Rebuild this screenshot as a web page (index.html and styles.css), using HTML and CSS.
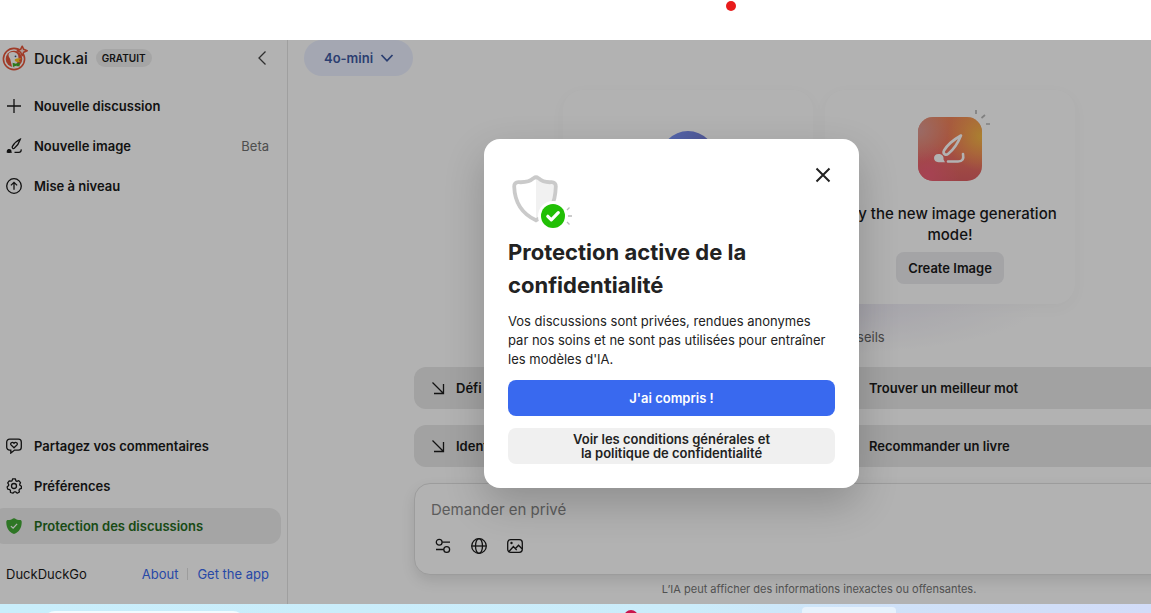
FILE: index.html
```html
<!DOCTYPE html>
<html lang="fr">
<head>
<meta charset="utf-8">
<meta name="viewport" content="width=device-width, initial-scale=1">
<title>Duck.ai</title>
<link rel="stylesheet" href="styles.css">
</head>
<body>
<header class="topstrip"><span class="rec-dot"></span></header>
<div class="app">
  <aside class="sidebar">
    <div class="brand">
      <svg class="logo" viewBox="0 0 26 26" width="26" height="26">
        <circle cx="12" cy="14" r="10.6" fill="none" stroke="#e5553a" stroke-width="1.600"/>
        <circle cx="12" cy="14" r="8.3" fill="#e5553a"/>
        <path d="M7 8.200c3-2.300 8.200-1.500 9.200 2.300l.6 5.300-2.300 2.500.8 3.200a8.300 8.300 0 0 1-5.300.3L8.200 14C6.500 11.500 6.200 10 7 8.200z" fill="#fff"/>
        <circle cx="13.500" cy="11.300" r=".9" fill="#31507a"/>
        <path d="M12.800 14.300c2-1 4.400-1.300 6.400-.8-.5 1-2.500 1.300-2.500 2s2 .4 1.800 1.100c-1.700.9-4.900.4-5.700-.8z" fill="#ffc21a"/>
        <path d="M10.600 17.800l3.400 1 3.600-1.600v4.400l-3.400-.8-3.200 1.200z" fill="#3fae2a"/>
        <path d="M20.200 1.200l1.500 3.100 3.500 1.400-3.500 1.500-1.500 3.400-1.600-3.400-3.300-1.500 3.300-1.400z" fill="#fbe0da" stroke="#e5553a" stroke-width="1.500" stroke-linejoin="round"/>
      </svg>
      <span class="brand-name">Duck.ai</span>
      <span class="badge">GRATUIT</span>
      <button class="collapse" aria-label="Réduire"><svg viewBox="0 0 10 16" width="10" height="16"><path d="M8.500 1.500L2 8l6.500 6.500"/></svg></button>
    </div>
    <nav class="menu">
      <button class="item"><svg viewBox="0 0 16 16" width="16" height="16"><path d="M8 1v14M1 8h14"/></svg><span>Nouvelle discussion</span></button>
      <button class="item"><svg viewBox="0 0 16 16" width="16" height="16"><path d="M14.300 1.200C11 2.700 8 5.600 6.300 8.600c-.5 1.200.9 2.500 2 1.700C11 8 13.200 4.800 14.300 1.200z"/><path d="M8.500 14.300h4.300c1.800 0 2.600-1.100 2.300-3"/><path class="solid" d="M.6 14.400c.4-.5-.1-1.200.4-2.200.9-1.700 3.300-1.600 4.200-.1.500 1-.1 2 1 2.500-1 .5-4.200.6-5.600-.2z"/></svg><span>Nouvelle image</span><small class="tag">Beta</small></button>
      <button class="item"><svg viewBox="0 0 16 16" width="16" height="16"><circle cx="8" cy="8" r="7.300"/><path d="M8 11.800V4.500M4.900 7.400L8 4.300l3.100 3.100"/></svg><span>Mise à niveau</span></button>
    </nav>
    <nav class="menu menu-bottom">
      <button class="item"><svg viewBox="0 0 16 16" width="16" height="16"><path d="M3.600 1.100h8.800a2.900 2.900 0 0 1 2.900 2.900v5.200a2.900 2.900 0 0 1-2.900 2.900H8.600l-3.800 3v-3H3.600A2.900 2.900 0 0 1 .7 9.200V4a2.900 2.900 0 0 1 2.900-2.900z"/><path d="M8 9.800L5 6.900C3.800 5.400 6.200 3.300 8 5.200c1.800-1.900 4.200.2 3 1.700z"/></svg><span>Partagez vos commentaires</span></button>
      <button class="item"><svg viewBox="0 0 16 16" width="16" height="16"><path d="M6.700.8h2.600l.6 2 1 .5 1.900-.7 1.700 2-.8 1.700.2 1 1.500 1v2l-1.900.9-.5.900.4 1.900-2.100 1.200-1.500-1.300H8.200l-1.300 1.300-2.400-.7-.1-2-.7-.9-2-.4-.6-2.300 1.500-1.300.1-1.100-1-1.700 1.500-2 2 .4.9-.6z" stroke-linejoin="round"/><circle cx="8" cy="8" r="2.500"/></svg><span>Préférences</span></button>
      <button class="item active"><svg viewBox="0 0 16 16" width="16" height="16"><path class="shield" d="M7 .5a1.800 1.800 0 0 1 2 0c1.400 1 3 1.500 5 1.500.9 0 1.700.7 1.700 1.700C15.900 9.800 13 14 8.700 15.800c-.5.200-.9.200-1.400 0C3 14 .1 9.800.3 3.700.3 2.700 1.100 2 2 2c2 0 3.600-.5 5-1.500z"/><path class="tick" d="M4.900 8.100l2.200 2.100 4-4.300"/></svg><span>Protection des discussions</span></button>
    </nav>
    <footer class="side-foot"><span>DuckDuckGo</span><span class="links"><a href="#about">About</a><i class="sep"></i><a href="#app">Get the app</a></span></footer>
  </aside>
  <main class="main">
    <button class="model">4o-mini <svg viewBox="0 0 14 10" width="14" height="10"><path d="M1.500 2L7 7.800 12.500 2"/></svg></button>
    <div class="column">
      <section class="cards">
        <article class="card"><span class="orb"></span></article>
        <article class="card">
          <svg class="tile" viewBox="0 0 72 72" width="72" height="72">
            <defs>
              <linearGradient id="g1" x1="0" y1="0" x2="0" y2="1"><stop offset="0" stop-color="#f0855a"/><stop offset=".55" stop-color="#ec735f"/><stop offset="1" stop-color="#dd6064"/></linearGradient>
              <radialGradient id="g2" cx="1" cy=".3" r=".55"><stop offset="0" stop-color="#f4b945"/><stop offset="1" stop-color="#ffb347" stop-opacity="0"/></radialGradient>
              <radialGradient id="g3" cx=".15" cy=".9" r=".5"><stop offset="0" stop-color="#ee6078"/><stop offset="1" stop-color="#ee6078" stop-opacity="0"/></radialGradient>
              <radialGradient id="g4" cx="0" cy=".2" r=".5"><stop offset="0" stop-color="#dd9a94"/><stop offset="1" stop-color="#dd9a94" stop-opacity="0"/></radialGradient>
            </defs>
            <rect y="8" width="64" height="64" rx="15" fill="url(#g1)"/><rect y="8" width="64" height="64" rx="15" fill="url(#g2)"/><rect y="8" width="64" height="64" rx="15" fill="url(#g3)"/><rect y="8" width="64" height="64" rx="15" fill="url(#g4)"/>
            <path d="M43 26.500C36 30.500 29 36.500 26 41.500c-1.500 3 1.700 5.500 4.300 3.300C35.500 40.500 40 34 43 26.500z" fill="none" stroke="#fff" stroke-width="2.600" stroke-linejoin="round"/>
            <path d="M30 52.500h10c4.500 0 6-2.500 5-7.500" fill="none" stroke="#fff" stroke-width="2.600" stroke-linecap="round"/>
            <path d="M20.500 45c4 0 5.500 2.500 5 5.500l1.500 2.700h-6.500c-6 0-6-8.200 0-8.200z" fill="#fff"/>
            <path d="M58 1v4M63.500 9l3.500-3M68 15h4" stroke="#b8b8b8" stroke-width="1.700"/>
          </svg>
          <h2>Try the new image generation mode!</h2>
          <button class="create">Create Image</button>
        </article>
      </section>
      <p class="hint">Questions et conseils</p>
      <section class="prompts">
        <button class="prompt"><svg viewBox="0 0 16 16" width="16" height="16"><path d="M2.500 2.500l11 11M13.500 4v9.500H4"/></svg>Défi du jour</button>
        <button class="prompt"><svg viewBox="0 0 16 16" width="16" height="16"><path d="M2.500 2.500l11 11M13.500 4v9.500H4"/></svg>Trouver un meilleur mot</button>
        <button class="prompt"><svg viewBox="0 0 16 16" width="16" height="16"><path d="M2.500 2.500l11 11M13.500 4v9.500H4"/></svg>Identifier un film</button>
        <button class="prompt"><svg viewBox="0 0 16 16" width="16" height="16"><path d="M2.500 2.500l11 11M13.500 4v9.500H4"/></svg>Recommander un livre</button>
      </section>
      <form class="composer">
        <textarea rows="1" aria-label="Demander en privé" placeholder="Demander en privé"></textarea>
        <div class="tools">
          <button type="button" aria-label="Réglages"><svg viewBox="0 0 16 16" width="16" height="16"><circle cx="4.200" cy="4.200" r="2.900"/><path d="M7.200 4.200H15M1 11.500h7.800"/><circle cx="11.700" cy="11.500" r="2.900"/></svg></button>
          <button type="button" aria-label="Recherche web"><svg viewBox="0 0 16 16" width="16" height="16"><circle cx="8" cy="8" r="7.300"/><ellipse cx="8" cy="8" rx="3.500" ry="7.300"/><path d="M.7 8h14.600"/></svg></button>
          <button type="button" aria-label="Ajouter une image"><svg viewBox="0 0 16 16" width="16" height="16"><rect x=".7" y="1.700" width="14.600" height="12.600" rx="3"/><path d="M2 13.500l4.400-5 3.300 3.600M8.500 10.500l3-3.200 3.500 3.500"/><circle class="solid" cx="4.500" cy="5" r="1.200"/></svg></button>
        </div>
      </form>
      <p class="disclaimer">L’IA peut afficher des informations inexactes ou offensantes.</p>
    </div>
  </main>
  <div class="overlay">
    <section class="modal" role="dialog" aria-labelledby="modal-title">
      <div class="modal-top">
        <svg class="guard" viewBox="0 0 64 56" width="64" height="56">
          <path d="M28 4c4 3.500 9 4.700 15.500 4.700 3 0 4.200 1.500 4.200 4C47.700 28 42 40 28 46z" fill="#f1f1f1"/>
          <path d="M25.600 4.200c1.600-1.200 3.200-1.200 4.800 0 3.400 3.200 7.500 4.300 13 4 3-.1 4.500 1.600 4.400 4.300C47.300 29 42.500 39.500 28 46.300 13.500 39.500 6.700 29 6.200 12.500 6.100 9.800 7.600 8.100 10.600 8.200c5.500.3 11.600-.8 15-4z" fill="none" stroke="#cacaca" stroke-width="3.800"/>
          <circle cx="45" cy="42" r="15" fill="#fff"/><circle cx="45" cy="42" r="12" fill="#21bf05"/>
          <path d="M39.800 42.300l3.500 3.500 7-7.200" fill="none" stroke="#fff" stroke-width="3.200" stroke-linecap="round" stroke-linejoin="round"/>
          <path d="M59 36l2.500-2.500M60 42h4M59 48l2.500 2.500" stroke="#bbb" stroke-width="1.300"/>
        </svg>
        <button class="close" aria-label="Fermer"><svg viewBox="0 0 16 16" width="16" height="16"><path d="M1.500 1.500l13 13M14.500 1.500l-13 13"/></svg></button>
      </div>
      <h1 id="modal-title">Protection active de la confidentialité</h1>
      <p class="modal-text">Vos discussions sont privées, rendues anonymes<br>par nos soins et ne sont pas utilisées pour entraîner<br>les modèles d'IA.</p>
      <button class="primary">J'ai compris !</button>
      <button class="secondary">Voir les conditions générales et<br>la politique de confidentialité</button>
    </section>
  </div>
</div>
<footer class="taskbar"><span class="search"></span><span class="alert"></span><span class="tab"></span></footer>
</body>
</html>
```

FILE: styles.css
```css
* { box-sizing: border-box; }
body { margin: 0; height: 100vh; display: flex; flex-direction: column; overflow: hidden; background: #fff; color: #1a1a1a; font-family: Inter, "Liberation Sans", sans-serif; font-size: 13px; }
button { font: inherit; color: inherit; border: 0; background: none; padding: 0; }
svg { flex: none; fill: none; stroke: currentColor; stroke-width: 1.3px; }
.logo, .tile, .guard { stroke: none; stroke-width: initial; }
.solid { fill: currentColor; stroke: none; }
h1, h2, p { margin: 0; }

.topstrip { flex: none; height: 40px; position: relative; }
.rec-dot { position: absolute; left: 726px; top: 1px; width: 10px; height: 10px; border-radius: 50%; background: #e81c1c; }

.app { flex: 1; min-height: 0; display: flex; position: relative; align-self: flex-start; }
.sidebar { width: 288px; border-right: 1px solid #e4e4e4; padding: 0 6px 0 0; display: flex; flex-direction: column; }
.brand { display: flex; align-items: center; height: 36px; padding: 0 14px 0 2px; }
.logo { margin-right: 6px; }
.brand-name { font-size: 15px; font-weight: 500; margin-right: 8px; }
.badge { background: #ededed; border-radius: 9px; padding: 0 6px; line-height: 18px; font-size: 10px; font-weight: 600; }
.collapse { margin-left: auto; height: 16px; color: #444; }
.menu { display: flex; flex-direction: column; gap: 4px; margin: 12px 0 0 -8px; }
.menu-bottom { margin-top: auto; }
.item { display: flex; align-items: center; gap: 12px; height: 36px; padding: 0 12px 0 14px; border-radius: 12px; font-weight: 600; text-align: left; }
.tag { margin-left: auto; font-size: 13px; font-weight: 400; color: #707070; }
.active { background: #ececec; color: #256b1d; }
.shield { fill: #43a935; stroke: none; }
.tick { stroke: #fff; }
.side-foot { display: flex; justify-content: space-between; align-items: center; height: 60px; padding: 0 12px 0 6px; }
.links { display: flex; align-items: center; gap: 9px; }
.links a { color: #3969ef; text-decoration: none; }
.sep { width: 1px; height: 12px; background: #e0e0e0; }

.main { min-width: 1062px; display: flex; flex-direction: column; }
.model { align-self: flex-start; flex: none; display: flex; align-items: center; gap: 7px; height: 36px; margin-left: 16px; padding: 0 19px 0 20px; border-radius: 18px; background: #ebf0ff; color: #3e5aa2; font-weight: 600; }
.model svg { stroke-width: 1.8px; }
.column { flex: 1; width: 810px; margin: 14px auto 0; display: flex; flex-direction: column; }
.cards { display: flex; justify-content: center; gap: 12px; }
.card { width: 250px; height: 214px; border-radius: 20px; background: #fff; box-shadow: 0 4px 16px #00000008; display: flex; flex-direction: column; align-items: center; padding: 19px 16px 20px; }
.orb { width: 56px; height: 56px; margin-top: 22px; border-radius: 50%; background: linear-gradient(90deg, #7b98ff, #7179cf); }
.tile { margin-left: 8px; }
.card h2 { margin: 22px 0 7px; font-size: 15px; line-height: 21px; font-weight: 500; text-align: center; }
.create { flex: none; height: 32px; padding: 0 12px; border-radius: 8px; background: #ebebee; font-weight: 600; }
.hint { text-align: center; color: #666; line-height: 18px; padding: 24px 0 21px; background: radial-gradient(ellipse 220px 50px at 50% 0, #eae7f3, #fff0); }
.prompts { display: grid; grid-template-columns: 1fr 1fr; gap: 16px; margin-bottom: 16px; }
.prompt { display: flex; align-items: center; gap: 10px; height: 42px; padding: 0 16px; border-radius: 12px; background: #e8e8e8; font-weight: 600; }
.composer { border: 1px solid #e0e0e0; border-radius: 16px; background: #fff; box-shadow: 0 6px 14px #0000001c; padding: 14px 16px 20px; }
.composer textarea { display: block; width: 100%; border: 0; padding: 0; resize: none; background: none; font: 15px/24px Inter, "Liberation Sans", sans-serif; color: inherit; outline: 0; overflow: hidden; }
.composer textarea::placeholder { color: #858585; }
.tools { display: flex; gap: 20px; margin-top: 16px; padding-left: 4px; }
.tools button { height: 16px; }
.disclaimer { margin-top: 5px; text-align: center; font-size: 11px; line-height: 18px; color: #747474; }

.overlay { position: absolute; inset: 0; display: grid; place-items: center; padding: 0 7px 17px 0; background: #0000004d; }
.modal { width: 375px; padding: 24px; border-radius: 16px; background: #fff; color: #222; box-shadow: 0 16px 40px #00000033; display: flex; flex-direction: column; }
.modal-top { display: flex; justify-content: space-between; align-items: flex-start; padding: 4px 4px 0 0; }
.guard { margin: 7px 0 6px; }
.close { height: 16px; }
.close svg { stroke-width: 2px; }
h1 { font-size: 22px; line-height: 33px; font-weight: 700; }
.modal-text { line-height: 19px; margin: 10px 0 11px; }
.primary, .secondary { height: 36px; border-radius: 8px; font-weight: 600; }
.primary { background: #3969ef; color: #fff; }
.secondary { margin-top: 12px; background: #f0f0f0; line-height: 14px; }

.taskbar { flex: none; height: 9px; position: relative; overflow: hidden; background: linear-gradient(90deg, #c9eefb, #cbecfa 60%, #cfe2f8 75%, #d2dcf8); }
.search, .alert, .tab { position: absolute; }
.search { left: 43px; top: 7px; width: 202px; height: 24px; border-radius: 12px; background: #f2fbfe; }
.alert { left: 624px; top: 6px; width: 14px; height: 14px; border-radius: 50%; background: #c8144a; }
.tab { left: 802px; top: 3px; width: 94px; height: 24px; border-radius: 4px; background: #e7f2fc; }
```
